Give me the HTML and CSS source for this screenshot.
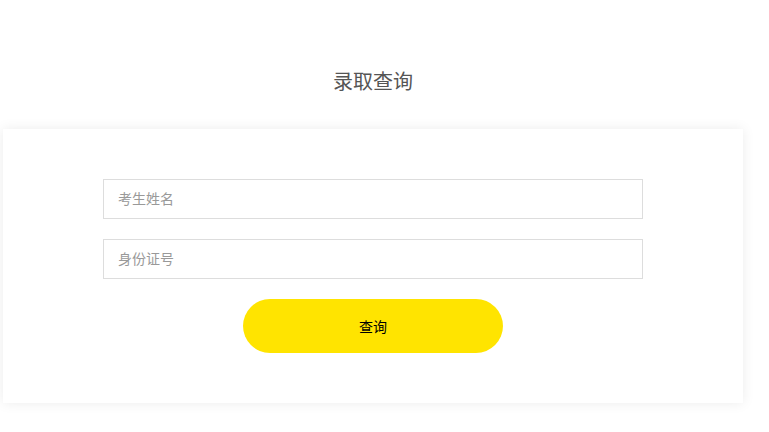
FILE: index.html
```html
<!DOCTYPE html>
<html lang="zh-CN">
<head>
    <meta charset="UTF-8">
    <meta name="viewport" content="width=device-width, initial-scale=1.0">
    <title>录取查询</title>
    <link rel="stylesheet" href="styles.css">
</head>
<body>
    <div class="page">
        <h2 class="title">录取查询</h2>

        <div class="card">
            <form class="query-form">
                <input class="field" type="text" placeholder="考生姓名">
                <input class="field" type="text" placeholder="身份证号">
                <button class="btn-query" type="button">查询</button>
            </form>
        </div>
    </div>
</body>
</html>
```

FILE: styles.css
```css
body {
    margin: 0;
    background: #fff;
    font-family: "Liberation Sans", "Noto Sans CJK SC", sans-serif;
    color: #333;
}

.page {
    width: 740px;
    margin-left: 3px;
    padding-bottom: 20px;
}

.title {
    margin: 0;
    padding: 70px 0 35px;
    font-size: 20px;
    line-height: 24px;
    font-weight: normal;
    color: #555;
    text-align: center;
}

.card {
    background: #fff;
    box-shadow: 0 0 12px rgba(0, 0, 0, 0.08);
    padding: 50px 100px;
}

.query-form {
    display: flex;
    flex-direction: column;
    align-items: center;
    gap: 20px;
}

.field {
    box-sizing: border-box;
    width: 540px;
    height: 40px;
    padding: 0 14px;
    border: 1px solid #ddd;
    outline: none;
    font-family: inherit;
    font-size: 14px;
    color: #333;
}

.field::placeholder {
    color: #999;
}

.btn-query {
    width: 260px;
    height: 54px;
    border: none;
    border-radius: 27px;
    background: #ffe400;
    color: #000;
    font-family: inherit;
    font-size: 14px;
    cursor: pointer;
}
```
